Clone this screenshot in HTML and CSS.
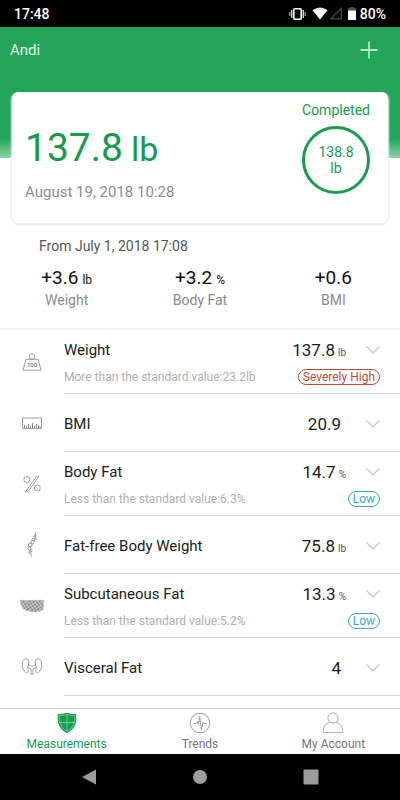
FILE: index.html
```html
<!DOCTYPE html>
<html lang="en">
<head>
<meta charset="utf-8">
<meta name="viewport" content="width=device-width, initial-scale=1">
<title>Measurements</title>
<link rel="stylesheet" href="styles.css">
</head>
<body>
<div class="statusbar">
  <span>17:48</span>
  <div class="status-icons">
    <svg width="17" height="14" viewBox="0 0 17 14"><rect x="4.8" y="1.8" width="7.4" height="10.4" rx="1" fill="none" stroke="#fff" stroke-width="1.6"/><path d="M2.7 3v8M14.3 3v8" stroke="#ccc" stroke-width="1.5"/><path d="M.8 5v4M16.2 5v4" stroke="#999" stroke-width="1.3"/></svg>
    <svg class="wifi" width="16" height="13" viewBox="0 0 16 13"><path d="M.5 3.2Q8-2.4 15.500 3.200L8 12.500z" fill="#fff"/></svg>
    <svg class="signal" width="12" height="13" viewBox="0 0 12 13"><path d="M11.300 1.200V11.800H1z" fill="none" stroke="#484848" stroke-width="1.200"/></svg>
    <svg class="battery" width="8" height="13" viewBox="0 0 8 13"><path d="M2.500 0h3v1.300H8V4H0V1.300h2.500z" fill="#555"/><path d="M0 3.600h8V13H0z" fill="#fff"/></svg>
    <span>80%</span>
  </div>
</div>

<header class="hero">
  <div class="titlebar">
    <h1>Andi</h1>
    <button class="add" type="button" aria-label="Add measurement"><svg width="18" height="18" viewBox="0 0 18 18"><path d="M9 .5v17M.5 9h17" stroke="#e6fff0" stroke-width="1.300"/></svg></button>
  </div>
  <section class="card">
    <div class="latest">
      <p class="big">137.8<span>lb</span></p>
      <p class="date">August 19, 2018 10:28</p>
    </div>
    <div class="goal">
      <p>Completed</p>
      <div class="ring"><span>138.8</span><span>lb</span></div>
    </div>
  </section>
</header>

<section class="change">
  <p class="since">From July 1, 2018 17:08</p>
  <div class="stats">
    <div><p class="delta">+3.6<small>lb</small></p><p class="name">Weight</p></div>
    <div><p class="delta">+3.2<small>%</small></p><p class="name">Body Fat</p></div>
    <div><p class="delta">+0.6</p><p class="name">BMI</p></div>
  </div>
</section>

<main class="list">
  <article class="row">
    <svg class="icon" width="24" height="24" viewBox="0 0 24 24"><circle cx="12" cy="6.500" r="2.800"/><path d="M5.800 9.300h12.400l2.800 10.900H3z"/><text x="12" y="16.600">100</text></svg>
    <div class="body">
      <div class="line"><h2>Weight</h2><span class="value">137.8<small>lb</small></span><button type="button" class="more" aria-label="Weight details"><svg width="14" height="8" viewBox="0 0 14 8"><path d="M.5 .5L7 7l6.500-6.500"/></svg></button></div>
      <div class="line note"><p>More than the standard value:23.2lb</p><span class="tag high">Severely High</span></div>
    </div>
  </article>
  <article class="row">
    <svg class="icon" width="24" height="24" viewBox="0 0 24 24"><path d="M2.500 7h19v10.500h-19z"/><path d="M4.500 17v-3M6.500 17v-2M8.500 17v-4M10.500 17v-2M12.500 17v-5M14.500 17v-2M16.500 17v-4M18.500 17v-3M20 17v-2" stroke-width="1"/></svg>
    <div class="body">
      <div class="line"><h2>BMI</h2><span class="value unitless">20.9</span><button type="button" class="more" aria-label="BMI details"><svg width="14" height="8" viewBox="0 0 14 8"><path d="M.5 .5L7 7l6.500-6.500"/></svg></button></div>
    </div>
  </article>
  <article class="row">
    <svg class="icon" width="24" height="24" viewBox="0 0 24 24"><circle cx="6.800" cy="7.500" r="3"/><circle cx="17.300" cy="16" r="3"/><path d="M16.600 4.300h2.400L8 19.700H5.600z"/></svg>
    <div class="body">
      <div class="line"><h2>Body Fat</h2><span class="value">14.7<small>%</small></span><button type="button" class="more" aria-label="Body fat details"><svg width="14" height="8" viewBox="0 0 14 8"><path d="M.5 .5L7 7l6.500-6.500"/></svg></button></div>
      <div class="line note"><p>Less than the standard value:6.3%</p><span class="tag low">Low</span></div>
    </div>
  </article>
  <article class="row">
    <svg class="icon" width="24" height="28" viewBox="0 0 24 28"><g stroke="#777" stroke-width=".7"><circle cx="15.600" cy="2" r=".4"/><circle cx="15" cy="5" r="1.100"/><circle cx="15.300" cy="7.500" r="1"/><circle cx="13.300" cy="8.500" r="1.300"/><circle cx="12.500" cy="11.200" r="1.600"/><circle cx="10.200" cy="14" r="1.900"/><circle cx="9.500" cy="17.500" r="1.400"/><circle cx="11" cy="19.500" r="1.100"/><circle cx="9.800" cy="21.500" r="1"/><circle cx="11.600" cy="25.500" r=".4"/><path d="M15.700 3v1M11.300 22.500l.2 1.500"/></g></svg>
    <div class="body">
      <div class="line"><h2>Fat-free Body Weight</h2><span class="value">75.8<small>lb</small></span><button type="button" class="more" aria-label="Fat-free body weight details"><svg width="14" height="8" viewBox="0 0 14 8"><path d="M.5 .5L7 7l6.500-6.500"/></svg></button></div>
    </div>
  </article>
  <article class="row">
    <svg class="icon" width="24" height="24" viewBox="0 0 24 24"><defs><pattern id="cells" width="4" height="4" patternUnits="userSpaceOnUse" patternTransform="rotate(12)"><path d="M0 0h4v4H0z" fill="#8c8c8c" stroke="none"/><ellipse cx="1" cy="1" rx="1" ry=".7" fill="#fff" stroke="none"/><ellipse cx="3" cy="3" rx="1" ry=".7" fill="#fff" stroke="none"/></pattern></defs><path d="M0 6.500l2-.4 4 .6 6-.5 6 .3 5.500-.3v2l-.5 1 .5 2-.5 2.500.2 2-2 .2-1 1.500-2.500-.2-2 1-2-.8-3 .4-2-1.300-2.500.2-1-1.500-2-.4-1-2.500L.8 10z" fill="url(#cells)" stroke="#999" stroke-width=".4"/></svg>
    <div class="body">
      <div class="line"><h2>Subcutaneous Fat</h2><span class="value">13.3<small>%</small></span><button type="button" class="more" aria-label="Subcutaneous fat details"><svg width="14" height="8" viewBox="0 0 14 8"><path d="M.5 .5L7 7l6.500-6.500"/></svg></button></div>
      <div class="line note"><p>Less than the standard value:5.2%</p><span class="tag low">Low</span></div>
    </div>
  </article>
  <article class="row">
    <svg class="icon" width="24" height="24" viewBox="0 0 24 24"><path d="M8.300 10.200C9.500 7 8.500 3.800 6 3.800c-3 0-4 3.700-3.700 7 .3 3.500 2 6.500 4.200 6.700 1.600 0 2-1.500 1.500-3-.4-1.500-.3-3 .3-4.300zM15.700 10.200c-1.200-3.200-.2-6.400 2.300-6.400 3 0 4 3.700 3.700 7-.3 3.500-2 6.500-4.200 6.700-1.600 0-2-1.500-1.500-3 .4-1.500.3-3-.3-4.300zM8.300 10.200q2.500-.5 3.700 1.500 1.200-2 3.700-1.500M8 12.500q3.200.3 3.200 3.500v4.200M16 12.500q-3.200.3-3.200 3.500v4.200"/></svg>
    <div class="body">
      <div class="line"><h2>Visceral Fat</h2><span class="value unitless">4</span><button type="button" class="more" aria-label="Visceral fat details"><svg width="14" height="8" viewBox="0 0 14 8"><path d="M.5 .5L7 7l6.500-6.500"/></svg></button></div>
    </div>
  </article>
</main>

<nav class="tabs">
  <a class="tab active" href="#measurements"><svg width="22" height="22" viewBox="0 0 22 22"><path d="M11 .8Q15.500 2.300 20 1.800C21.200 10 19.500 17 11 21.200 2.500 17 .8 10 2 1.800 6.500 2.300 11 .8 11 .8z" fill="#169c4d"/><path d="M11 2.600q4 1.200 7.600.8C19.300 10 17.500 15.700 11 19.300 4.500 15.700 2.700 10 3.400 3.400 7 3.800 11 2.600 11 2.600zM11 2.600v16.700M3.200 10.500h15.600" fill="none" stroke="#a5e3bd" stroke-width=".6"/></svg>Measurements</a>
  <a class="tab" href="#trends"><svg width="22" height="22" viewBox="0 0 22 22"><g fill="none" stroke="#888" stroke-width=".8"><circle cx="11" cy="11" r="9.800"/><path d="M4.800 11.500h2.400l1.300-2 1 2.300 1.200-7.300 1.800 13 1.600-7.500 1 1.500h2.500"/></g></svg>Trends</a>
  <a class="tab" href="#account"><svg width="22" height="22" viewBox="0 0 22 22"><g fill="none" stroke="#999" stroke-width=".8"><circle cx="11" cy="6" r="5.100"/><path d="M8 10.200C3.500 11.500 1.300 15 1.300 20.600h19.400c0-5.600-2.200-9.100-6.700-10.400"/></g></svg>My Account</a>
</nav>

<div class="sysnav">
  <button type="button" aria-label="Back"><svg width="16" height="16" viewBox="0 0 16 16"><path d="M1 8L15 .5v15z"/></svg></button>
  <button type="button" aria-label="Home"><svg width="16" height="16" viewBox="0 0 16 16"><circle cx="8" cy="8" r="7"/></svg></button>
  <button type="button" aria-label="Recent apps"><svg width="16" height="16" viewBox="0 0 16 16"><rect x=".5" y=".5" width="15" height="15" rx="1"/></svg></button>
</div>
</body>
</html>
```
FILE: styles.css
```css
* { box-sizing: border-box; }

body {
  margin: 0;
  height: 100vh;
  display: flex;
  flex-direction: column;
  background: #fff;
  color: #1c1c1c;
  font-family: Roboto, "Liberation Sans", sans-serif;
  font-size: 14px;
  line-height: 20px;
}

h1, h2, p { margin: 0; font-weight: 400; }
button { padding: 0; border: 0; background: none; display: flex; align-items: center; justify-content: center; }
svg { display: block; flex: none; }

.statusbar {
  flex: none;
  display: flex;
  justify-content: space-between;
  align-items: center;
  height: 27px;
  padding: 0 14px;
  background: #000;
  color: #fff;
  font-weight: 500;
}
.status-icons { display: flex; align-items: center; }
.wifi { margin-left: 6px; }
.signal { margin-left: 2px; }
.battery { margin: 0 4px 0 6px; }

.hero {
  flex: none;
  padding: 0 12px;
  background: linear-gradient(#22a559 112px, #8fd2aa 131px) no-repeat top / 100% 131px;
}
.titlebar {
  display: flex;
  justify-content: space-between;
  align-items: center;
  height: 65px;
  padding: 0 10px 20px 0;
  margin-left: -2px;
}
.titlebar h1 { font-size: 15px; color: #e6fff0; }
.add { width: 18px; height: 18px; }

.card {
  display: flex;
  justify-content: space-between;
  height: 131px;
  padding: 8px 18px 0 13px;
  background: #fff;
  border-radius: 7px;
  box-shadow: 0 1px 2px 1px #ececec;
  clip-path: inset(0 -3px -4px -3px);
}
.latest { padding-top: 24px; }
.big { display: flex; align-items: baseline; gap: 8px; color: #169c4d; font-size: 39px; line-height: 48px; }
.big span { font-size: 34px; }
.date { margin-top: 9px; color: #8c8c8c; font-size: 15px; }
.goal { display: flex; flex-direction: column; align-items: center; color: #169c4d; }
.ring {
  display: flex;
  flex-direction: column;
  align-items: center;
  justify-content: center;
  width: 68px;
  height: 68px;
  margin-top: 6px;
  border: 3px solid #169c4d;
  border-radius: 50%;
  line-height: 16px;
}

.change { flex: none; padding: 13px 0 18px; border-bottom: 2px solid #f4f4f4; }
.since { padding-left: 39px; color: #555; }
.stats { display: grid; grid-template-columns: repeat(3, 1fr); margin-top: 10px; text-align: center; }
.delta { font-size: 19px; line-height: 24px; color: #111; }
.delta small { margin-left: 4px; font-size: 12px; line-height: 12px; }
.name { color: #8c8c8c; }

.list { flex: 1; min-height: 0; overflow: hidden; }
.row { display: grid; grid-template-columns: 64px 1fr; }
.icon { align-self: center; justify-self: center; fill: none; stroke: #888; stroke-width: 0.8; }
.icon text { fill: #555; stroke: none; font-size: 6px; text-anchor: middle; }
.body { padding: 8px 20px 6px 0; border-bottom: 1px solid #dcdcdc; }
.line { display: flex; align-items: center; height: 24px; }
.line:only-child { height: 43px; }
.line h2 { flex: 1; font-size: 15px; }
.value { font-size: 17px; }
.unitless { margin-right: 5px; }
.value small { margin-left: 3px; font-size: 10px; line-height: 10px; color: #555; }
.more { width: 14px; height: 14px; margin-left: 20px; }
.more path { fill: none; stroke: #c4c4c4; stroke-width: 1.2; }
.note { height: 25px; padding-top: 4px; justify-content: space-between; }
.note p { color: #b0b0b0; font-size: 12px; }
.tag { padding: 0 4px; border: 1px solid; border-radius: 8px; font-size: 12px; line-height: 14px; }
.high { color: #c34a3a; }
.low { color: #3ba9c4; }

.tabs {
  flex: none;
  display: grid;
  grid-template-columns: repeat(3, 1fr);
  height: 46px;
  border-top: 1px solid #d0d0d0;
  background: #fff;
}
.tab {
  display: flex;
  flex-direction: column;
  align-items: center;
  padding-top: 3px;
  color: #757575;
  font-size: 12px;
  text-decoration: none;
}
.active { color: #169c4d; }

.sysnav {
  flex: none;
  display: flex;
  justify-content: center;
  gap: 95px;
  height: 46px;
  background: #000;
}
.sysnav svg { fill: #9c9c9c; }
```
